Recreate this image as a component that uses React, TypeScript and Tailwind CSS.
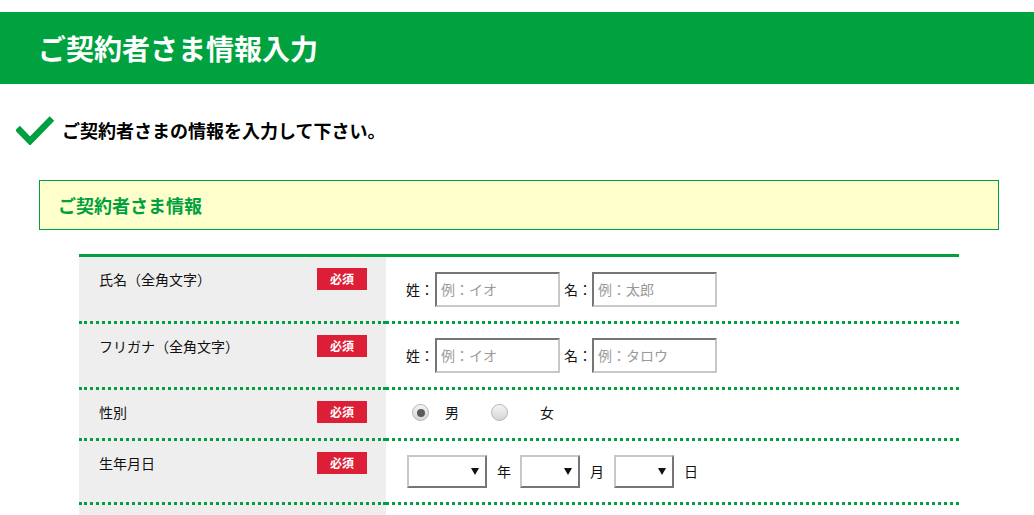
import React from "react";

const G = "#00a040";

function Badge() {
  return (
    <span className="inline-flex h-[22px] w-[50px] items-center justify-center bg-[#dc1f36] text-[12px] font-bold leading-none text-white">
      必須
    </span>
  );
}

function Label({ text }: { text: string }) {
  return (
    <div className="flex items-center justify-between pl-[20px] pr-[19px] pt-[11px]">
      <span className="text-[14px] leading-[22px] text-[#111]">{text}</span>
      <Badge />
    </div>
  );
}

function TextBox({ ph }: { ph: string }) {
  return (
    <div className="flex h-[35px] w-[125px] items-center border-2 border-t-[#767676] border-l-[#767676] border-b-[#c8c8c8] border-r-[#c8c8c8] bg-white pl-[4px] text-[14px] text-[#9a9a9a]">
      {ph}
    </div>
  );
}

function Radio({ checked }: { checked?: boolean }) {
  return (
    <span className="flex h-[17px] w-[17px] items-center justify-center rounded-full border border-[#b4b4b4] bg-gradient-to-b from-[#f4f4f4] to-[#d6d6d6]">
      {checked && <span className="h-[8px] w-[8px] rounded-full bg-[#5a5a5a]" />}
    </span>
  );
}

function SelectBox({ w }: { w: string }) {
  return (
    <div
      className={`flex h-[33px] ${w} items-center justify-end border-2 border-t-[#c8c8c8] border-l-[#c8c8c8] border-b-[#767676] border-r-[#767676] bg-white pr-[6px]`}
    >
      <svg width="8" height="7" viewBox="0 0 8 7">
        <polygon points="0,0 8,0 4,7" fill="#111" />
      </svg>
    </div>
  );
}

export default function App() {
  const cellL = "bg-[#eeeeee] border-b-[3px] border-dotted border-[#00a040]";
  const cellR = "bg-white border-b-[3px] border-dotted border-[#00a040] flex items-center";
  return (
    <div
      className="w-[1034px] h-[515px] overflow-hidden bg-white pt-[12px]"
      style={{ fontFamily: '"Noto Sans CJK JP", "Noto Sans", sans-serif' }}
    >
      <div className="flex h-[72px] items-center bg-[#00a23f] pl-[38px]">
        <h1 className="text-[28px] font-bold leading-none text-white">ご契約者さま情報入力</h1>
      </div>

      <div className="mt-[28px] flex h-[36px] items-center pl-[16px]">
        <svg width="38" height="30" viewBox="0 0 38 30">
          <polyline points="1.5,13 14,26 36,3.5" fill="none" stroke={G} strokeWidth="6.5" />
        </svg>
        <p className="ml-[8px] text-[18px] font-bold leading-none text-black">
          ご契約者さまの情報を入力して下さい。
        </p>
      </div>

      <div className="ml-[39px] mt-[32px] flex h-[50px] w-[960px] items-center border border-[#00a040] bg-[#ffffcc] pl-[18px]">
        <h2 className="text-[18px] font-bold leading-none text-[#00a040]">ご契約者さま情報</h2>
      </div>

      <div className="ml-[79px] mt-[24px] grid w-[880px] grid-cols-[307px_1fr] border-t-[3px] border-[#00a040]">
        <div className={`${cellL} h-[67px]`}>
          <Label text="氏名（全角文字）" />
        </div>
        <div className={`${cellR} h-[67px] pl-[20px] text-[14px] text-[#111]`}>
          <span className="w-[29px]">姓：</span>
          <TextBox ph="例：イオ" />
          <span className="ml-[4px] w-[28px]">名：</span>
          <TextBox ph="例：太郎" />
        </div>

        <div className={`${cellL} h-[66px]`}>
          <Label text="フリガナ（全角文字）" />
        </div>
        <div className={`${cellR} h-[66px] pl-[20px] text-[14px] text-[#111]`}>
          <span className="w-[29px]">姓：</span>
          <TextBox ph="例：イオ" />
          <span className="ml-[4px] w-[28px]">名：</span>
          <TextBox ph="例：タロウ" />
        </div>

        <div className={`${cellL} h-[51px]`}>
          <Label text="性別" />
        </div>
        <div className={`${cellR} h-[51px] pb-[3px] pl-[26px] text-[14px] text-[#111]`}>
          <Radio checked />
          <span className="ml-[16px]">男</span>
          <span className="ml-[32px]">
            <Radio />
          </span>
          <span className="ml-[32px]">女</span>
        </div>

        <div className={`${cellL} h-[64px]`}>
          <Label text="生年月日" />
        </div>
        <div className={`${cellR} h-[64px] pl-[21px] text-[14px] text-[#111]`}>
          <SelectBox w="w-[80px]" />
          <span className="ml-[10px] mr-[9px]">年</span>
          <SelectBox w="w-[60px]" />
          <span className="ml-[10px] mr-[10px]">月</span>
          <SelectBox w="w-[60px]" />
          <span className="ml-[10px]">日</span>
        </div>

        <div className="h-[40px] bg-[#eeeeee]" />
        <div className="h-[40px] bg-white" />
      </div>
    </div>
  );
}
